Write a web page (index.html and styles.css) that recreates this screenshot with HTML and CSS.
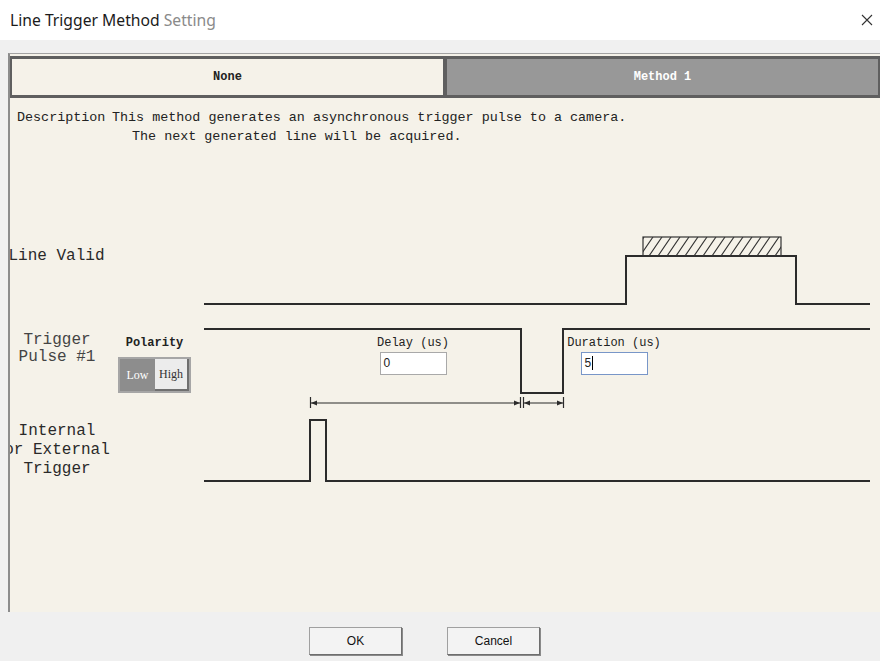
FILE: index.html
```html
<!DOCTYPE html>
<html lang="en">
<head>
<meta charset="utf-8">
<title>Line Trigger Method Setting</title>
<link rel="stylesheet" href="styles.css">
</head>
<body>
<div class="dialog">
  <header class="titlebar">
    <h1 class="title"><span class="title-main">Line Trigger Method</span> <span class="title-sub">Setting</span></h1>
    <button class="close" aria-label="Close">
      <svg width="12" height="12" viewBox="0 0 12 12"><path d="M1 1 L11 11 M11 1 L1 11" stroke="#333" stroke-width="1.1" fill="none"/></svg>
    </button>
  </header>

  <main class="panel">
    <nav class="tabs">
      <div class="tab tab-on">None</div>
      <div class="tab tab-off">Method 1</div>
    </nav>

    <section class="desc">
      <span class="desc-label">Description</span>
      <p class="desc-text">This method generates an asynchronous trigger pulse to a camera.<br>The next generated line will be acquired.</p>
    </section>

    <section class="diagram">
      <svg class="wave" width="870" height="466" viewBox="0 0 870 466">
        <defs>
          <pattern id="hatch" patternUnits="userSpaceOnUse" x="0" y="91" width="9" height="19">
            <path d="M-9 19 L4 0 M0 19 L13 0" stroke="#333" stroke-width="1.1" fill="none"/>
          </pattern>
        </defs>
        <g fill="none" stroke="#2b2b2b" stroke-width="2">
          <!-- line valid -->
          <path d="M194 158 H616 V110 H786 V158 H860"/>
          <!-- trigger pulse -->
          <path d="M194 183 H511 V247 H553 V183 H860"/>
          <!-- internal / external trigger -->
          <path d="M194 335 H300 V274 H316 V335 H860"/>
        </g>
        <rect x="633" y="91" width="138" height="19" fill="url(#hatch)" stroke="#333" stroke-width="1.2"/>
        <!-- delay and duration spans -->
        <g stroke="#2b2b2b" stroke-width="1.2" fill="none">
          <path d="M300.5 251 V262 M300 257 H510 M510.5 251 V262"/>
          <path d="M513.5 251 V262 M513 257 H553 M553.5 251 V262"/>
        </g>
        <g fill="#2b2b2b">
          <path d="M301 257 L307 254.5 L307 259.5 Z"/>
          <path d="M510 257 L504 254.5 L504 259.5 Z"/>
          <path d="M514 257 L520 254.5 L520 259.5 Z"/>
          <path d="M553 257 L547 254.5 L547 259.5 Z"/>
        </g>
      </svg>

      <div class="sig sig-valid"><span>Line Valid</span></div>
      <div class="sig sig-pulse"><span>Trigger</span><span>Pulse #1</span></div>
      <div class="sig sig-ext"><span>Internal</span><span>or External</span><span>Trigger</span></div>

      <div class="polarity">
        <span class="field-label bold">Polarity</span>
        <div class="toggle">
          <span class="seg seg-on">Low</span>
          <span class="seg seg-off">High</span>
        </div>
      </div>

      <div class="field field-delay">
        <span class="field-label">Delay (us)</span>
        <span class="box">0</span>
      </div>
      <div class="field field-duration">
        <span class="field-label">Duration (us)</span>
        <span class="box box-focus">5<i class="caret"></i></span>
      </div>
    </section>
  </main>

  <footer class="buttons">
    <button class="btn">OK</button>
    <button class="btn">Cancel</button>
  </footer>
</div>
</body>
</html>
```

FILE: styles.css
```css
* { box-sizing: border-box; }

body {
  margin: 0;
  width: 880px;
  height: 661px;
  overflow: hidden;
  background: #f0f0f0;
  font-family: "Liberation Mono", monospace;
  color: #222;
}

.dialog {
  display: flex;
  flex-direction: column;
  height: 661px;
}

/* window caption */
.titlebar {
  height: 40px;
  flex: none;
  background: #fff;
  display: flex;
  align-items: center;
  justify-content: space-between;
  padding: 0 6px 0 10px;
}
.title {
  margin: 0;
  font: 400 15.7px "Noto Sans", sans-serif;
}
.title-main { color: #1b1b1b; }
.title-sub { color: #8a8a8a; }
.close {
  border: 0;
  background: none;
  padding: 0;
  width: 14px;
  height: 14px;
  display: flex;
  align-items: center;
  justify-content: center;
}

/* main panel */
.panel {
  margin: 13px 0 0 8px;
  height: 559px;
  flex: none;
  background: #f5f2e9;
  border-left: 2px solid #8c8c8c;
  border-top: 1px solid #a3a3a3;
  display: flex;
  flex-direction: column;
}

.tabs {
  margin-top: 2px;
  height: 42px;
  flex: none;
  display: flex;
  gap: 4px;
  padding: 3px 2px;
  background: #5f5f5f;
}
.tab {
  flex: 1;
  display: flex;
  align-items: center;
  justify-content: center;
  font-size: 12px;
  font-weight: bold;
}
.tab-on { background: #f5f2e9; color: #222; }
.tab-off { background: #989898; color: #fff; }

.desc {
  margin-top: 10px;
  padding-left: 7px;
  display: flex;
  font-size: 13.4px;
  line-height: 19px;
  height: 38px;
  flex: none;
}
.desc-label { width: 95px; flex: none; }
.desc-text {
  margin: 0;
  padding-left: 20px;
  text-indent: -20px;
}

/* timing diagram */
.diagram {
  position: relative;
  flex: 1;
  overflow: hidden;
}
.wave {
  position: absolute;
  left: 0;
  top: 0;
}

.sig {
  position: absolute;
  left: 0;
  width: 94px;
  overflow: hidden;
  display: flex;
  flex-direction: column;
  align-items: center;
  font-size: 16px;
  white-space: nowrap;
  color: #2a2a2a;
}
.sig-valid { top: 100px; left: -1px; width: 95px; line-height: 20px; }
.sig-pulse { top: 186px; line-height: 17px; color: #444; }
.sig-ext { top: 276px; left: -7px; width: 108px; line-height: 19px; }

.polarity {
  position: absolute;
  left: 108px;
  top: 190px;
  width: 73px;
  display: flex;
  flex-direction: column;
  align-items: center;
}
.field-label {
  font-size: 12px;
  line-height: 14px;
  white-space: nowrap;
}
.bold { font-weight: bold; }

.toggle {
  margin-top: 7px;
  width: 73px;
  height: 36px;
  display: flex;
  border: 2px solid #a6a6a6;
  background: #a6a6a6;
}
.seg {
  display: flex;
  align-items: center;
  justify-content: center;
  font-family: "Liberation Serif", serif;
  font-size: 12px;
}
.seg-on {
  width: 35px;
  background: #8d8d8d;
  color: #fff;
}
.seg-off {
  flex: 1;
  background: #ececec;
  color: #333;
  border-right: 2px solid #6f6f6f;
  border-bottom: 2px solid #6f6f6f;
}

.field {
  position: absolute;
  top: 190px;
  width: 120px;
  display: flex;
  flex-direction: column;
  align-items: center;
}
.field-delay { left: 343px; }
.field-duration { left: 544px; }
.box {
  margin-top: 2px;
  width: 67px;
  height: 23px;
  background: #fff;
  border: 1px solid #a9a9a9;
  padding: 3px 0 0 3px;
  font: 12px "Liberation Sans", sans-serif;
  line-height: 15px;
  display: flex;
  align-items: flex-start;
}
.box-focus { border-color: #7896c8; }
.caret {
  display: inline-block;
  width: 1px;
  height: 14px;
  margin-left: 1px;
  background: #000;
}

/* dialog buttons */
.buttons {
  flex: 1;
  display: flex;
  justify-content: center;
  align-items: flex-start;
  gap: 45px;
  padding: 15px 31px 0 0;
}
.btn {
  width: 93px;
  height: 28px;
  background: #f3f3f3;
  border: 1px solid #a0a0a0;
  border-right-color: #6e6e6e;
  border-bottom-color: #6e6e6e;
  box-shadow: 1px 1px 0 #8a8a8a;
  font: 12px "Liberation Sans", sans-serif;
  color: #111;
  padding: 0;
}
```
